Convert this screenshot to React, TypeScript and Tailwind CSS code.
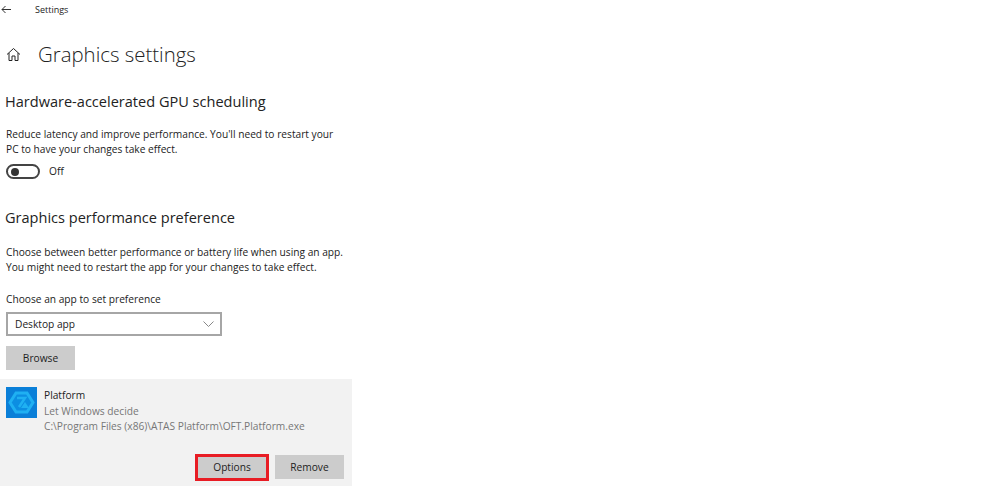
const font = "font-['Open_Sans','Noto_Sans',sans-serif]";

function HomeIcon() {
  return (
    <svg width="15" height="15" viewBox="0 0 15 15" fill="none" stroke="#222" strokeWidth="1">
      <path d="M1 7.5 7.5 1.5 14 7.5" />
      <path d="M3 6v7.5h3V9h3v4.5h3V6" />
    </svg>
  );
}

function AppIcon() {
  return (
    <div className="h-[31px] w-[31px] shrink-0 bg-[#0a7fd8]">
      <svg width="31" height="31" viewBox="0 0 31 31">
        <path d="M10 6h11l6 9.5L21 25H10L4 15.5z" fill="#0c8ee2" stroke="#1fb0f2" strokeWidth="3" />
        <path d="M11 11h8l-6 9" fill="none" stroke="#1fb0f2" strokeWidth="2.5" />
        <path d="M19 15l4 6h-8z" fill="#1fb0f2" />
      </svg>
    </div>
  );
}

export default function App() {
  return (
    <div className={`${font} h-[497px] w-[1005px] overflow-hidden bg-white text-[#222]`}>
      <div className="flex h-[19px] items-center">
        <svg className="ml-[1px]" width="11" height="9" viewBox="0 0 11 9" fill="none" stroke="#333" strokeWidth="1">
          <path d="M10 4.5H1M4.5 1 1 4.5 4.5 8" />
        </svg>
        <span className="ml-[23px] text-[9px]">Settings</span>
      </div>

      <div className="mt-[20px] flex h-[30px] items-center pl-[6px]">
        <HomeIcon />
        <h1 className="ml-[17px] text-[20.4px] leading-[30px] font-light">Graphics settings</h1>
      </div>

      <h2 className="mt-[22px] pl-[5px] text-[14.55px] leading-[20px]">Hardware-accelerated GPU scheduling</h2>
      <p className="mt-[16px] pl-[6px] text-[10.2px] leading-[15px]">
        Reduce latency and improve performance. You'll need to restart your
        <br />
        PC to have your changes take effect.
      </p>
      <div className="mt-[7px] flex items-center pl-[6px]">
        <div className="flex h-[15px] w-[34px] items-center rounded-full border-2 border-[#444] pl-[3px]">
          <div className="h-[8px] w-[8px] rounded-full bg-[#333]" />
        </div>
        <span className="ml-[9px] text-[10.2px] leading-[15px]">Off</span>
      </div>

      <h2 className="mt-[28px] pl-[5px] text-[14.55px] leading-[20px]">Graphics performance preference</h2>
      <p className="mt-[18px] pl-[6px] text-[10.2px] leading-[14.5px]">
        Choose between better performance or battery life when using an app.
        <br />
        You might need to restart the app for your changes to take effect.
      </p>
      <p className="mt-[18px] pl-[6px] text-[10.2px] leading-[15px]">Choose an app to set preference</p>
      <div className="mt-[5px] ml-[6px] flex h-[24px] w-[216px] items-center justify-between border-2 border-[#a6a6a6] bg-white pr-[6px] pl-[7px]">
        <span className="pt-px text-[10.2px]">Desktop app</span>
        <svg width="11" height="6" viewBox="0 0 11 6" fill="none" stroke="#888" strokeWidth="1">
          <path d="M.5.5l5 5 5-5" />
        </svg>
      </div>
      <button className="mt-[10px] ml-[6px] block h-[24px] w-[69px] bg-[#ccc] pt-px text-[10.2px]">Browse</button>

      <div className="mt-[9px] h-[107px] w-[352px] bg-[#f2f2f2] pt-[8px] pl-[6px]">
        <div className="flex">
          <AppIcon />
          <div className="ml-[7px] text-[10.2px] leading-[15.5px]">
            <div className="pt-px">Platform</div>
            <div className="text-[#777]">Let Windows decide</div>
            <div className="text-[#777]">C:\Program Files (x86)\ATAS Platform\OFT.Platform.exe</div>
          </div>
        </div>
        <div className="mt-[19px] flex items-center justify-end gap-[6px] pr-[8px]">
          <button className="h-[27px] w-[74px] border-[3px] border-[#e81c24] bg-[#ccc] pt-px text-[10.2px]">Options</button>
          <button className="h-[24px] w-[69px] bg-[#ccc] pt-px text-[10.2px]">Remove</button>
        </div>
      </div>
    </div>
  );
}
